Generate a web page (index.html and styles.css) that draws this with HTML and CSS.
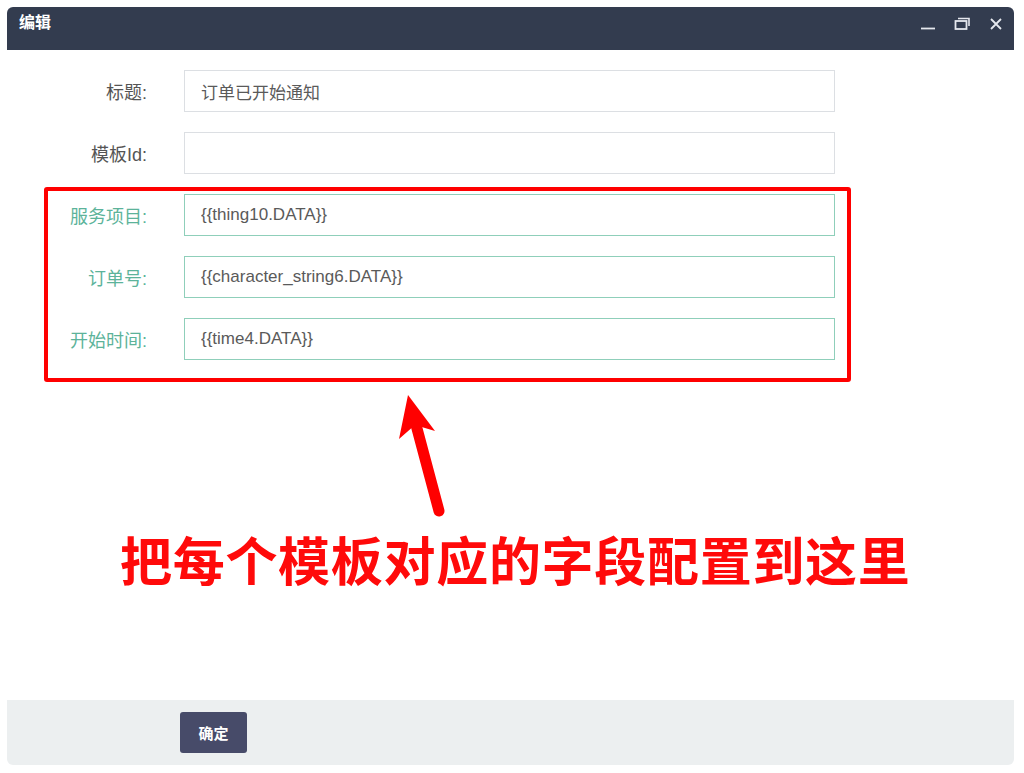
FILE: index.html
```html
<!DOCTYPE html>
<html lang="zh-CN">
<head>
    <meta charset="UTF-8">
    <meta name="viewport" content="width=device-width, initial-scale=1.0">
    <title>编辑</title>
    <link rel="stylesheet" href="styles.css">
</head>
<body>

<div class="window">
    <div class="window-header">
        <span class="window-title">编辑</span>
        <div class="window-tools">
            <svg class="tool" width="16" height="16" viewBox="0 0 16 16"><path d="M1 12.5H15" stroke="#e6e8ee" stroke-width="1.8"/></svg>
            <svg class="tool" width="16" height="16" viewBox="0 0 16 16"><rect x="1.5" y="5" width="11" height="8" fill="none" stroke="#e6e8ee" stroke-width="1.8"/><path d="M4 2.5H15V10" fill="none" stroke="#e6e8ee" stroke-width="1.6"/></svg>
            <svg class="tool" width="16" height="16" viewBox="0 0 16 16"><path d="M3 3L13 13M13 3L3 13" stroke="#e6e8ee" stroke-width="1.8"/></svg>
        </div>
    </div>

    <div class="window-body">
        <form class="form">
            <div class="form-row">
                <label class="form-label">标题:</label>
                <input class="form-input" type="text" value="订单已开始通知">
            </div>
            <div class="form-row">
                <label class="form-label">模板Id:</label>
                <input class="form-input" type="text" value="">
            </div>
            <div class="form-row field">
                <label class="form-label">服务项目:</label>
                <input class="form-input" type="text" value="{{thing10.DATA}}">
            </div>
            <div class="form-row field">
                <label class="form-label">订单号:</label>
                <input class="form-input" type="text" value="{{character_string6.DATA}}">
            </div>
            <div class="form-row field">
                <label class="form-label">开始时间:</label>
                <input class="form-input" type="text" value="{{time4.DATA}}">
            </div>
        </form>

        <!-- annotation over the screenshot -->
        <div class="mark-box"></div>
        <svg class="mark-arrow" width="60" height="140" viewBox="0 0 60 140">
            <path d="M42 118L18 28" stroke="#ff0000" stroke-width="11" stroke-linecap="round"/>
            <path d="M11 2L2 46L18 32L38 38Z" fill="#ff0000"/>
        </svg>
        <div class="mark-text">把每个模板对应的字段配置到这里</div>
    </div>

    <div class="window-footer">
        <button type="button" class="btn-ok">确定</button>
    </div>
</div>

</body>
</html>
```

FILE: styles.css
```css
body {
    margin: 0;
    background-color: #fff;
    font-family: "Liberation Sans", "Noto Sans CJK SC", sans-serif;
}
.window {
    position: relative;
    margin: 7px;
    width: 1007px;
    height: 758px;
    display: flex;
    flex-direction: column;
    background-color: #fff;
    border-radius: 6px;
}
.window-header {
    height: 43px;
    background-color: #333c4f;
    border-radius: 6px 6px 0 0;
    display: flex;
    justify-content: space-between;
    align-items: flex-start;
    padding: 4px 10px 0 12px;
    box-sizing: border-box;
}
.window-title {
    color: #fff;
    font-size: 16px;
    font-weight: bold;
    line-height: 20px;
    font-family: "Noto Sans CJK SC", sans-serif;
}
.window-tools {
    display: flex;
    gap: 18px;
    padding-top: 5px;
}
.window-body {
    flex: 1;
}
.form {
    display: flex;
    flex-direction: column;
    gap: 20px;
    padding-top: 20px;
}
.form-row {
    display: flex;
    align-items: center;
}
.form-label {
    width: 140px;
    margin-right: 37px;
    text-align: right;
    font-size: 18px;
    color: #555;
}
.form-input {
    width: 651px;
    height: 42px;
    box-sizing: border-box;
    border: 1px solid #dcdfe3;
    padding: 0 16px;
    font-family: "Liberation Sans", "Noto Sans CJK SC", sans-serif;
    font-size: 17px;
    color: #5a5a5a;
    outline: none;
}
.field .form-label {
    color: #5cb39a;
}
.field .form-input {
    border-color: #8fcfba;
}

/* red annotation */
.mark-box {
    position: absolute;
    left: 37px;
    top: 180px;
    width: 807px;
    height: 195px;
    box-sizing: border-box;
    border: 4px solid #ff0000;
    border-radius: 3px;
}
.mark-arrow {
    position: absolute;
    left: 390px;
    top: 386px;
}
.mark-text {
    position: absolute;
    left: 113px;
    top: 522px;
    width: 820px;
    font-family: "Noto Sans CJK SC", sans-serif;
    font-size: 52px;
    font-weight: bold;
    line-height: 60px;
    color: #ff0a0a;
    letter-spacing: 0.7px;
}

.window-footer {
    height: 65px;
    background-color: #eceff0;
    border-radius: 0 0 6px 6px;
    padding: 12px 0 0 173px;
    box-sizing: border-box;
}
.btn-ok {
    width: 67px;
    height: 41px;
    background-color: #474b69;
    border: none;
    border-radius: 3px;
    color: #fff;
    font-family: "Noto Sans CJK SC", sans-serif;
    font-size: 15px;
    font-weight: bold;
}
```
